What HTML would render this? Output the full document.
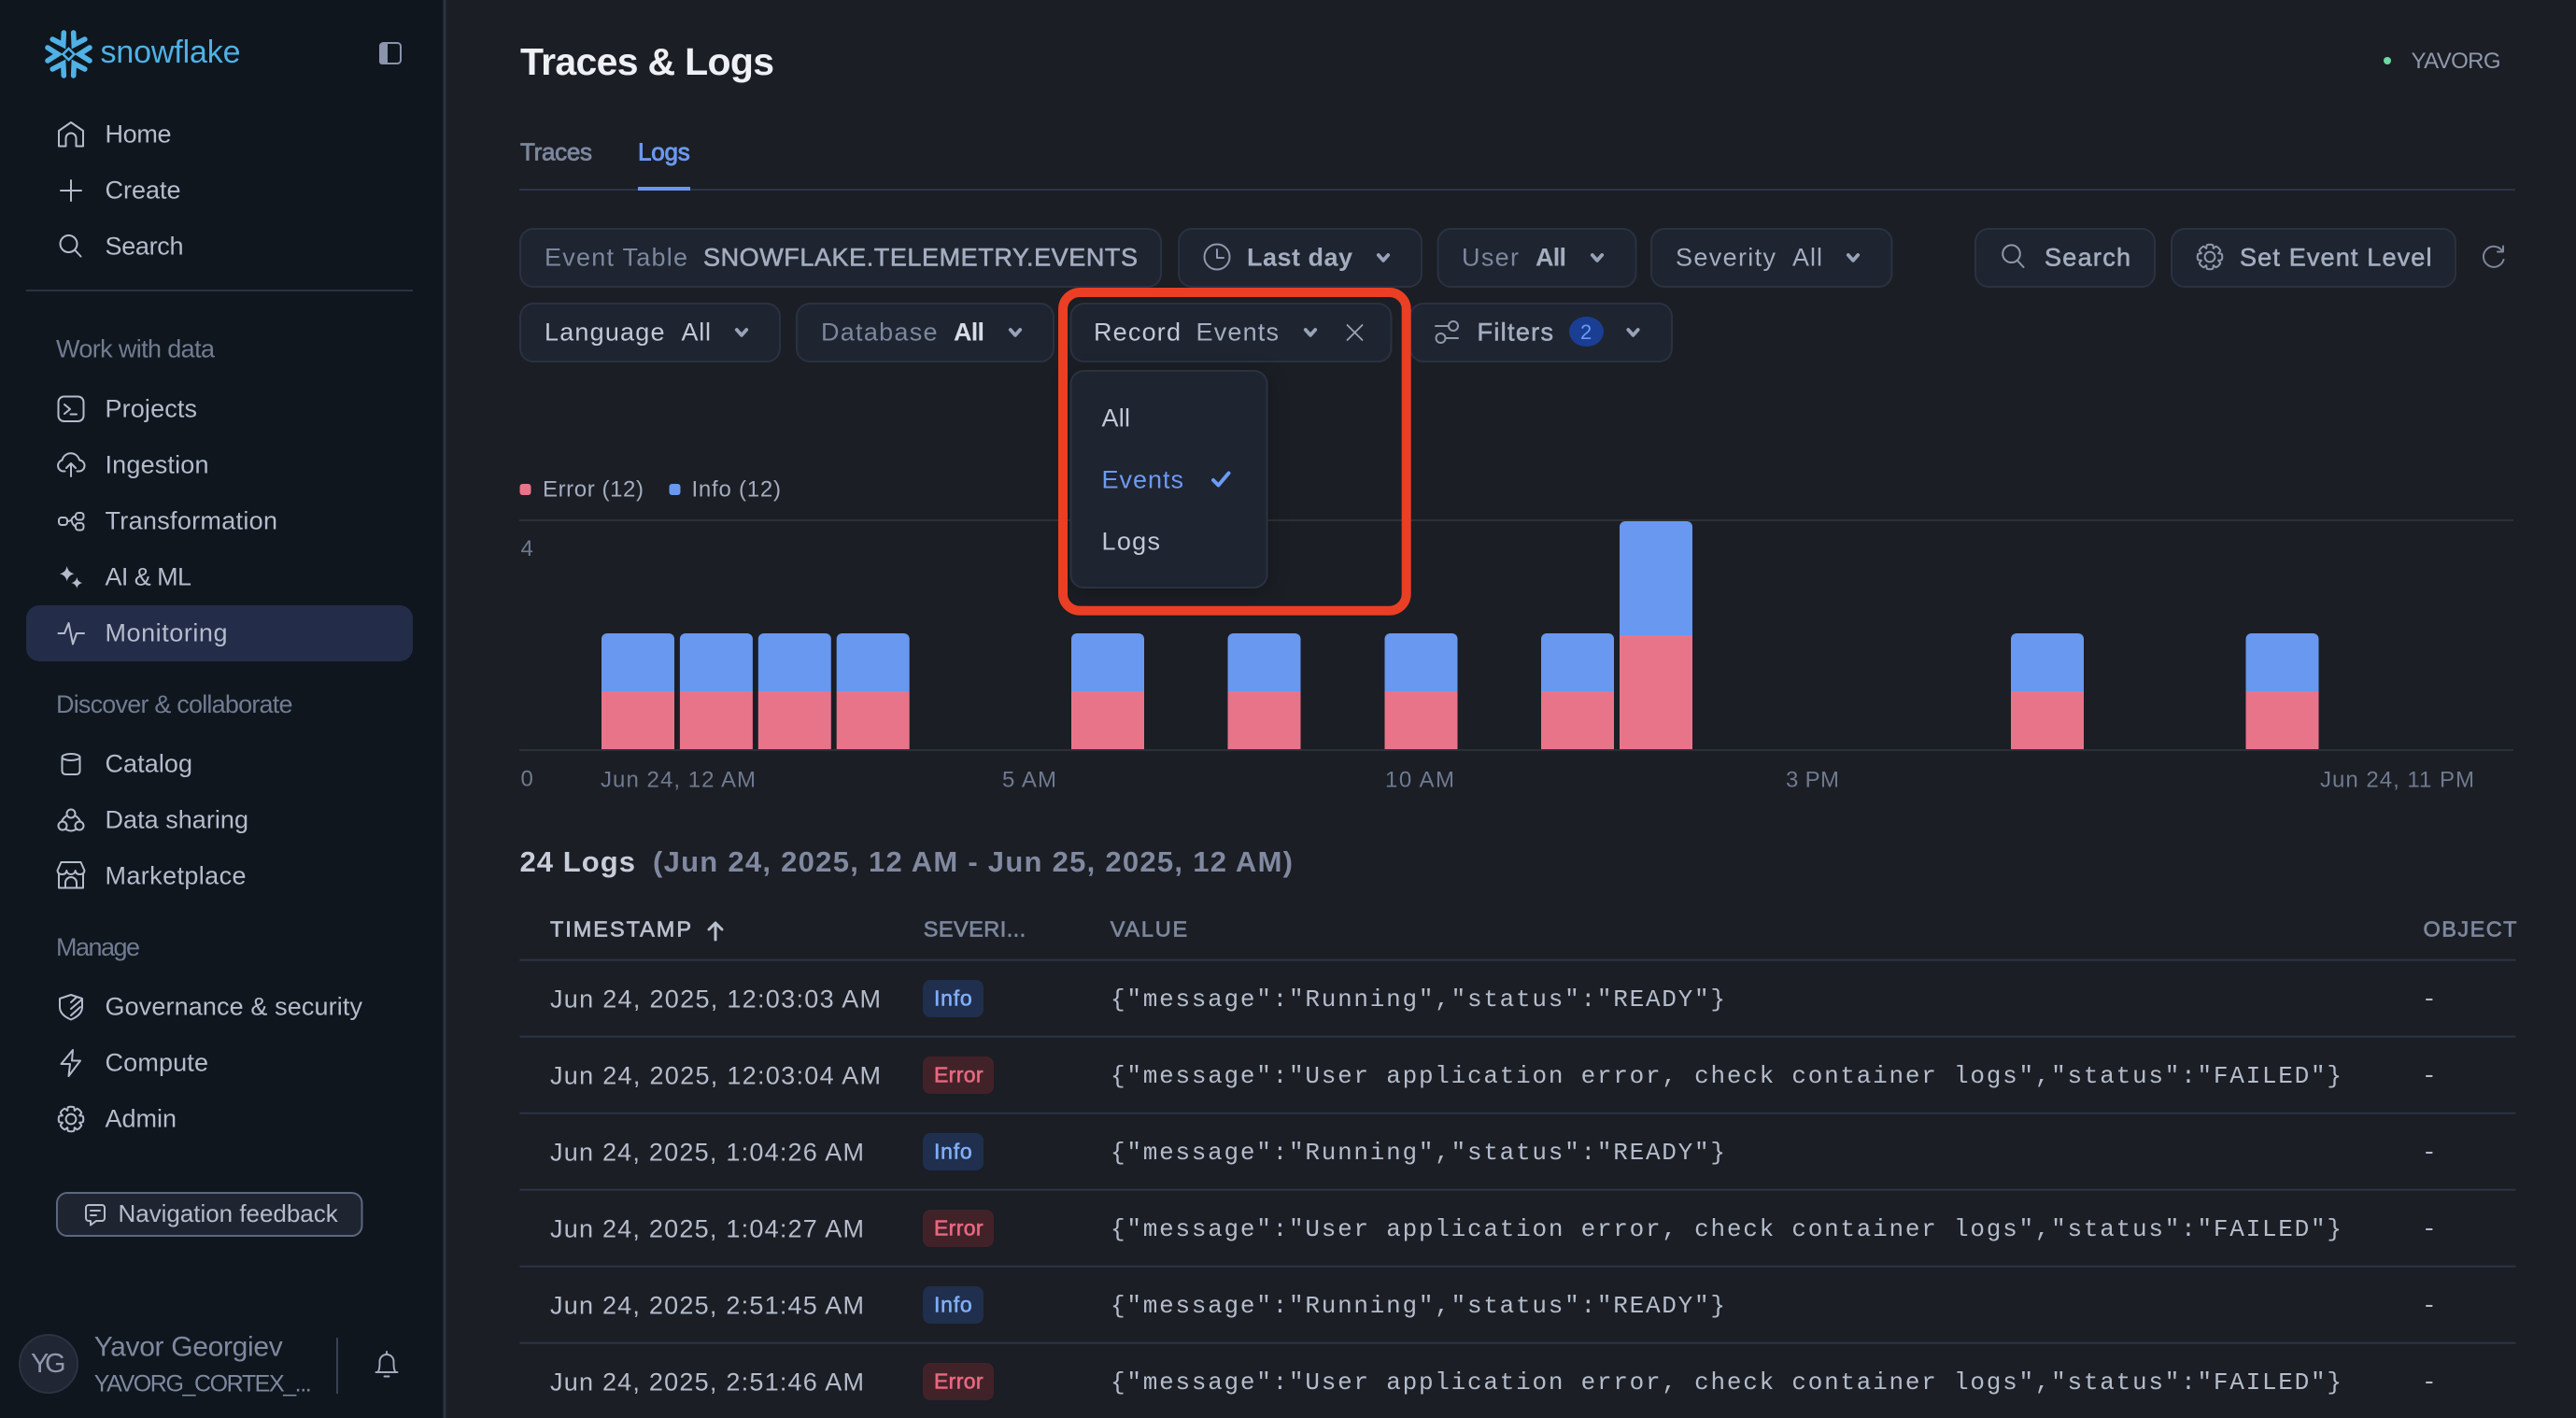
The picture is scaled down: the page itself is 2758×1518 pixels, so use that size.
<!DOCTYPE html>
<html lang="en"><head><meta charset="utf-8"><title>Traces &amp; Logs</title>
<style>
html,body{margin:0;padding:0;background:#1b1e24;overflow:hidden}
svg{display:block}
text{font-family:"Liberation Sans",Arial,sans-serif;font-size:27px;fill:currentColor;stroke:currentColor;stroke-width:0;white-space:pre}
.mono{font-family:"Liberation Mono",monospace;font-size:26px}
.m{stroke-width:.6px}.b{font-weight:700}
.nav{color:#b4bccc}
.sec{color:#717c92;font-size:25px}
.dim{color:#7c879e}.mid{color:#a4adc0}.hi{color:#c2c8d6}.br{color:#d8dce6}
.ax{color:#6f7a90;font-size:24px}
.leg{color:#a4adc0;font-size:24px}
.ts{color:#b4bccc}
.th{font-size:23.500px;color:#7c879e;stroke-width:.7px}
.i{fill:none;stroke:#b4bccc;stroke-width:2;stroke-linecap:round;stroke-linejoin:round}
.g{fill:none;stroke:#8f98ac;stroke-width:2;stroke-linecap:round;stroke-linejoin:round}
.chip{fill:#1e2530;stroke:#2a3142;stroke-width:2}
.ln{fill:#2c3447}
.cl{fill:#2c3038}
</style></head><body>
<svg xmlns="http://www.w3.org/2000/svg" width="2758" height="1518" viewBox="0 0 2758 1518">
<defs>
<path id="ch" d="M-5.200-3 0 2.800 5.200-3" fill="none" stroke="#98a2b8" stroke-width="3.800" stroke-linecap="round" stroke-linejoin="round"/>
<path id="t" d="M9.2-3.8Q11.5-3.6 12.7-3.2 13.9 0 12.7 3.2 11.5 3.6 9.2 3.8" />
<g id="gear"><use href="#t"/><use href="#t" transform="rotate(45)"/><use href="#t" transform="rotate(90)"/><use href="#t" transform="rotate(135)"/><use href="#t" transform="rotate(180)"/><use href="#t" transform="rotate(225)"/><use href="#t" transform="rotate(270)"/><use href="#t" transform="rotate(315)"/><circle r="5.4"/></g>
<g id="bar"><path d="M0 684a6 6 0 0 1 6-6h66a6 6 0 0 1 6 6v56H0z" fill="#6898f0"/><rect y="740" width="78" height="62" fill="#e8748a"/></g>
<path id="arm" d="M22.500-7 11.500 0 22.500 7" fill="none" stroke="#4fb1e6" stroke-width="5.600" stroke-linecap="round" stroke-linejoin="miter"/>
</defs>

<rect width="2758" height="1518" fill="#1b1e24"/>
<!-- sidebar -->
<rect width="475" height="1518" fill="#0f161e"/>
<rect x="474.500" width="3" height="1518" fill="#2c3242"/>
<g transform="translate(73.500 58)"><use href="#arm"/><use href="#arm" transform="rotate(60)"/><use href="#arm" transform="rotate(120)"/><use href="#arm" transform="rotate(180)"/><use href="#arm" transform="rotate(240)"/><use href="#arm" transform="rotate(300)"/><path d="M0-6 6 0 0 6-6 0Z" fill="none" stroke="#4fb1e6" stroke-width="2.600"/></g>
<text x="107.500" y="67" textLength="150" style="font-size:34px;color:#4fb1e6">snowflake</text>
<rect x="407" y="46" width="22" height="22" rx="3.500" fill="none" stroke="#8a94ab" stroke-width="2"/>
<path d="M406 49a3 3 0 0 1 3-3h6v23h-6a3 3 0 0 1-3-3z" fill="#8a94ab"/>

<rect x="28" y="648" width="414" height="60" rx="14" fill="#232c48"/>
<rect x="28" y="310" width="414" height="2" fill="#2c3242"/>

<g class="i">
<path d="M63 156.500V140L76 131l13 9v16.500H81.500V148a5.500 5.500 0 0 0-11 0v8.500Z"/>
<path d="M76 193v22M65 204h22"/>
<circle cx="73.500" cy="261" r="9"/><path d="M80 267.500l6.500 7"/>
<rect x="62.500" y="424.500" width="27" height="26.500" rx="6"/><path d="M69 433l6 5-6 5M75.500 443.500H82"/>
<path d="M69.500 504.500H68a6 6 0 0 1-1.500-11.800 9.500 9.500 0 0 1 18.500-.2A6 6 0 0 1 84 504.500h-1.500M76 510v-14M71 501l5-5 5 5"/>
<rect x="63" y="554" width="9" height="8" rx="3"/><rect x="81" y="549" width="8.500" height="7.500" rx="3"/><rect x="81" y="560" width="8.500" height="7.500" rx="3"/><path d="M72 558q4 0 5-2.500t4-3M77 558q0 3 4 6"/>
<path d="M62.500 678H69l4.500-11 4.500 22.500 4-11.500h8"/>
<ellipse cx="76" cy="810.500" rx="9.500" ry="3.500"/><path d="M66.500 810.500V825q0 4 4.500 4h10q4.500 0 4.500-4v-14.500"/>
<circle cx="76" cy="871" r="4.500"/><circle cx="67" cy="884" r="4.500"/><circle cx="85" cy="884" r="4.500"/><path d="M71.800 873q-4.300 2.500-5.800 6.500M80.200 873q4.300 2.500 5.800 6.500M71 888q5 3 10 0"/>
<path d="M65.500 923h21l4 9q-.5 4-5 4-4.500 0-4.800-4-.7 4-4.700 4t-4.700-4q-.3 4-4.800 4-4.500 0-5-4z"/><path d="M63 936v14.500h26V936M70 950.500V945a6 6 0 0 1 12 0v5.500"/>
<path d="M76 1065l12 4v9c0 7-6 11-12 13.500-6-2.500-12-6.500-12-13.500v-9z"/><path d="M76 1073l6-5.500M76 1080l11-9.500M76 1087l10-9"/>
<path d="M78 1124l-12.500 15H75l-1.500 13L86 1135.500h-9z"/>
<use href="#gear" transform="translate(76 1198)"/>
</g>
<path d="M71.700 606Q73 613 79.700 614.300 73 615.600 71.700 622.500 70.400 615.600 63.700 614.300 70.400 613 71.700 606ZM82.300 618Q83.200 623 88.300 624 83.200 625 82.300 630 81.400 625 76.300 624 81.400 623 82.300 618Z" fill="#b4bccc"/>

<g class="nav">
<text x="112.500" y="152.700" textLength="71">Home</text>
<text x="112.500" y="212.700" textLength="81">Create</text>
<text x="112.500" y="272.700" textLength="84">Search</text>
<text x="112.500" y="446.700" textLength="98.500">Projects</text>
<text x="112.500" y="506.700" textLength="111">Ingestion</text>
<text x="112.500" y="566.700" textLength="184.500">Transformation</text>
<text x="112.500" y="626.700" textLength="92.500">AI &amp; ML</text>
<text x="112.500" y="686.700" textLength="131">Monitoring</text>
<text x="112.500" y="826.700" textLength="93.500">Catalog</text>
<text x="112.500" y="886.700" textLength="153.500">Data sharing</text>
<text x="112.500" y="946.700" textLength="151">Marketplace</text>
<text x="112.500" y="1086.700" textLength="275.500">Governance &amp; security</text>
<text x="112.500" y="1146.700" textLength="110.500">Compute</text>
<text x="112.500" y="1206.700" textLength="76.500">Admin</text>
</g>
<g class="sec">
<text x="60" y="382.700" textLength="170">Work with data</text>
<text x="60" y="763" textLength="253.500">Discover &amp; collaborate</text>
<text x="60" y="1023" textLength="90">Manage</text>
</g>

<rect x="61" y="1277" width="326.500" height="46" rx="11" fill="#1e2530" stroke="#5c6780" stroke-width="2"/>
<path class="i" d="M95 1290h14a3 3 0 0 1 3 3v11a3 3 0 0 1-3 3h-6l-6 4.500V1307h-2a3 3 0 0 1-3-3v-11a3 3 0 0 1 3-3ZM97 1296h10M97 1301h6"/>
<text x="126.500" y="1308" textLength="235.200" style="color:#b4bccc;font-size:26px">Navigation feedback</text>

<circle cx="52" cy="1460" r="31" fill="#202633" stroke="#2c3242" stroke-width="2"/>
<text x="33" y="1469" textLength="37.600" style="color:#8f98ac;font-size:29px">YG</text>
<text x="100.700" y="1451.700" textLength="202" style="color:#7e899f;font-size:30px">Yavor Georgiev</text>
<text x="100.700" y="1489.300" textLength="233" style="color:#7e899f;font-size:25px">YAVORG_CORTEX_...</text>
<rect x="360" y="1432" width="2" height="60" fill="#3a4254"/>
<path d="M414 1447v2.500M404.500 1469q2-3 2-9v-2.500a7.500 7.500 0 0 1 15 0v2.500q0 6 2 9M402.500 1469h23M411.500 1473.500h5" fill="none" stroke="#a4adc0" stroke-width="1.900" stroke-linecap="round" stroke-linejoin="round"/>

<!-- header -->
<text class="b" x="557" y="80" textLength="272" style="font-size:41px;color:#eef0f5">Traces &amp; Logs</text>
<circle cx="2556" cy="65" r="4" fill="#6fd8a4"/>
<text x="2581.500" y="73" textLength="96" style="font-size:24px;color:#8f98ac">YAVORG</text>
<text class="m" x="557" y="171.700" textLength="77" style="color:#7c879e;font-size:26px;stroke-width:.8px">Traces</text>
<text class="m" x="683" y="171.700" textLength="55.700" style="color:#6a98ee;font-size:26px;stroke-width:.9px">Logs</text>
<rect x="556" y="202" width="2137" height="2" class="ln"/>
<rect x="683" y="200" width="56" height="4" fill="#6a98ee"/>

<!-- filter row 1 -->
<rect class="chip" x="557" y="245" width="686" height="62" rx="14"/>
<text class="dim" x="583" y="284.500" textLength="153">Event Table</text>
<text class="mid m" x="753" y="284.500" textLength="465">SNOWFLAKE.TELEMETRY.EVENTS</text>

<rect class="chip" x="1262" y="245" width="260" height="62" rx="14"/>
<circle class="g" cx="1303" cy="275" r="13.500"/><path class="g" d="M1303 267v9h7"/>
<text class="mid b" x="1335" y="284.500" textLength="113">Last day</text>
<use href="#ch" x="1481" y="276"/>

<rect class="chip" x="1539.500" y="245" width="212" height="62" rx="14"/>
<text class="dim" x="1565" y="284.500" textLength="61">User</text>
<text class="mid b" x="1644" y="284.500" textLength="33">All</text>
<use href="#ch" x="1710" y="276"/>

<rect class="chip" x="1768" y="245" width="257.500" height="62" rx="14"/>
<text class="mid" x="1794" y="284.500" textLength="107">Severity</text>
<text class="mid" x="1919" y="284.500" textLength="32">All</text>
<use href="#ch" x="1984" y="276"/>

<rect class="chip" x="2115" y="245" width="192" height="62" rx="14"/>
<circle class="g" cx="2153.500" cy="271.700" r="9.300"/><path class="g" d="M2160 279l6.500 7"/>
<text class="mid m" x="2189" y="284.500" textLength="92">Search</text>

<rect class="chip" x="2325" y="245" width="304" height="62" rx="14"/>
<use href="#gear" class="g" transform="translate(2366 275)"/>
<text class="mid m" x="2398" y="284.500" textLength="205.500">Set Event Level</text>

<path d="M2679 268.500A11 11 0 1 0 2680.500 278M2680 263.500v6h-6" fill="none" stroke="#7c879e" stroke-width="2" stroke-linecap="round" stroke-linejoin="round"/>

<!-- filter row 2 -->
<rect class="chip" x="557" y="325" width="278" height="62" rx="14"/>
<text class="hi" x="583" y="364.500" textLength="128.500">Language</text>
<text class="hi" x="729.500" y="364.500" textLength="31.500">All</text>
<use href="#ch" x="794" y="356"/>

<rect class="chip" x="853" y="325" width="275" height="62" rx="14"/>
<text class="dim" x="879" y="364.500" textLength="124.500">Database</text>
<text class="br b" x="1021" y="364.500" textLength="33">All</text>
<use href="#ch" x="1087" y="356"/>

<rect class="chip" x="1510" y="325" width="280" height="62" rx="14"/>
<path class="g" d="M1537 349h13.500M1548.500 362H1561"/><circle class="g" cx="1556" cy="349" r="5"/><circle class="g" cx="1542.500" cy="362" r="5"/>
<text class="mid m" x="1581.500" y="364.500" textLength="81.500">Filters</text>
<ellipse cx="1698.500" cy="355" rx="18.500" ry="16" fill="#1a3e94"/>
<text x="1692" y="363" textLength="13" style="font-size:22px;color:#6c9af5">2</text>
<use href="#ch" x="1748.500" y="356"/>

<rect class="chip" x="1146.500" y="325" width="343" height="62" rx="14"/>
<text class="hi" x="1171" y="364.500" textLength="93">Record</text>
<text class="mid" x="1280.500" y="364.500" textLength="88.500">Events</text>
<use href="#ch" x="1403" y="356"/>
<path d="M1442.500 348l16 16M1458.500 348l-16 16" fill="none" stroke="#9aa3b6" stroke-width="1.800" stroke-linecap="round"/>

<!-- chart -->
<rect x="556.500" y="518" width="12" height="12" rx="3" fill="#e8748a"/>
<text class="leg" x="581" y="531.500" textLength="108">Error (12)</text>
<rect x="716.500" y="518" width="12" height="12" rx="3" fill="#6898f0"/>
<text class="leg" x="740.500" y="531.500" textLength="95.500">Info (12)</text>
<rect x="556" y="556" width="2135" height="2" class="cl"/>
<rect x="556" y="802" width="2135" height="2" class="cl"/>
<text class="ax" x="557.500" y="595" textLength="13.500">4</text>
<text class="ax" x="557.500" y="841.700" textLength="13.500">0</text>
<text class="ax" x="643" y="842.700" textLength="166">Jun 24, 12 AM</text>
<text class="ax" x="1073" y="842.700" textLength="58">5 AM</text>
<text class="ax" x="1483" y="842.700" textLength="74">10 AM</text>
<text class="ax" x="1912" y="842.700" textLength="57">3 PM</text>
<text class="ax" x="2484" y="842.700" textLength="165">Jun 24, 11 PM</text>
<use href="#bar" x="644"/><use href="#bar" x="727.900"/><use href="#bar" x="811.800"/><use href="#bar" x="895.700"/>
<use href="#bar" x="1147"/><use href="#bar" x="1314.500"/><use href="#bar" x="1482.500"/><use href="#bar" x="1650"/>
<path d="M1734 564a6 6 0 0 1 6-6h66a6 6 0 0 1 6 6v116h-78z" fill="#6898f0"/><rect x="1734" y="680" width="78" height="122" fill="#e8748a"/>
<use href="#bar" x="2153"/><use href="#bar" x="2404.500"/>

<!-- dropdown -->
<rect x="1146.500" y="397" width="210" height="232" rx="14" fill="#1e2430" stroke="#2b3242" stroke-width="2" style="filter:drop-shadow(0 4px 10px rgba(0,0,0,.25))"/>
<text class="hi" x="1179.500" y="456.700" textLength="30.500">All</text>
<text x="1179.500" y="522.700" textLength="87.500" style="color:#6c9af5">Events</text>
<path d="M1299 514l5.500 5.500 11-13" fill="none" stroke="#6c9af5" stroke-width="4" stroke-linecap="round" stroke-linejoin="round"/>
<text class="hi" x="1179.500" y="588.300" textLength="62.500">Logs</text>
<rect x="1138" y="313" width="367.700" height="340.700" rx="18" fill="none" stroke="#ea3f25" stroke-width="10"/>

<!-- table -->
<text class="b" x="556.500" y="933" textLength="123.500" style="font-size:31px;color:#c8cdda">24 Logs</text>
<text class="b" x="699" y="933" textLength="685" style="font-size:31px;color:#8089a0">(Jun 24, 2025, 12 AM - Jun 25, 2025, 12 AM)</text>

<text class="th" x="589" y="1002.700" textLength="151" style="color:#b8bfce">TIMESTAMP</text>
<path d="M766 1006v-18M759 995l7-7 7 7" fill="none" stroke="#b8bfce" stroke-width="3" stroke-linecap="round" stroke-linejoin="round"/>
<text class="th" x="988.700" y="1002.700" textLength="109.500">SEVERI...</text>
<text class="th" x="1188.700" y="1002.700" textLength="82.500">VALUE</text>
<text class="th" x="2594.500" y="1002.700" textLength="100">OBJECT</text>

<g class="ln"><rect x="556.500" y="1026.700" width="2137" height="2"/><rect x="556.500" y="1108.700" width="2137" height="2"/><rect x="556.500" y="1190.700" width="2137" height="2"/><rect x="556.500" y="1272.700" width="2137" height="2"/><rect x="556.500" y="1354.700" width="2137" height="2"/><rect x="556.500" y="1436.700" width="2137" height="2"/></g>

<g class="ts">
<text x="589" y="1078.300" textLength="354">Jun 24, 2025, 12:03:03 AM</text>
<text x="589" y="1160.300" textLength="354">Jun 24, 2025, 12:03:04 AM</text>
<text x="589" y="1242.300" textLength="336">Jun 24, 2025, 1:04:26 AM</text>
<text x="589" y="1324.300" textLength="336">Jun 24, 2025, 1:04:27 AM</text>
<text x="589" y="1406.300" textLength="336">Jun 24, 2025, 2:51:45 AM</text>
<text x="589" y="1488.300" textLength="336">Jun 24, 2025, 2:51:46 AM</text>
</g>

<g fill="#1f2f4d"><rect x="988" y="1049" width="65" height="40" rx="8"/><rect x="988" y="1213" width="65" height="40" rx="8"/><rect x="988" y="1377" width="65" height="40" rx="8"/></g>
<g fill="#422229"><rect x="988" y="1131" width="76" height="40" rx="8"/><rect x="988" y="1295" width="76" height="40" rx="8"/><rect x="988" y="1459" width="76" height="40" rx="8"/></g>
<g style="color:#82aef8">
<text class="m" style="font-size:23px" x="1000" y="1076.700" textLength="40.700">Info</text>
<text class="m" style="font-size:23px" x="1000" y="1240.700" textLength="40.700">Info</text>
<text class="m" style="font-size:23px" x="1000" y="1404.700" textLength="40.700">Info</text>
</g>
<g style="color:#e8687f">
<text class="m" style="font-size:23px" x="1000" y="1158.700" textLength="52.500">Error</text>
<text class="m" style="font-size:23px" x="1000" y="1322.700" textLength="52.500">Error</text>
<text class="m" style="font-size:23px" x="1000" y="1486.700" textLength="52.500">Error</text>
</g>

<g class="ts">
<text class="mono" x="1189" y="1077" textLength="658">{"message":"Running","status":"READY"}</text>
<text class="mono" x="1189" y="1159" textLength="1318">{"message":"User application error, check container logs","status":"FAILED"}</text>
<text class="mono" x="1189" y="1241" textLength="658">{"message":"Running","status":"READY"}</text>
<text class="mono" x="1189" y="1323" textLength="1318">{"message":"User application error, check container logs","status":"FAILED"}</text>
<text class="mono" x="1189" y="1405" textLength="658">{"message":"Running","status":"READY"}</text>
<text class="mono" x="1189" y="1487" textLength="1318">{"message":"User application error, check container logs","status":"FAILED"}</text>
<text class="mono" x="2593" y="1077">-</text>
<text class="mono" x="2593" y="1159">-</text>
<text class="mono" x="2593" y="1241">-</text>
<text class="mono" x="2593" y="1323">-</text>
<text class="mono" x="2593" y="1405">-</text>
<text class="mono" x="2593" y="1487">-</text>
</g>
</svg>
</body></html>
